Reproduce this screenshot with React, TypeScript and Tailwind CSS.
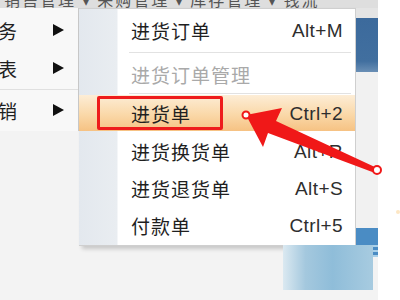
import React from "react";

const cjk = "font-['Noto_Sans_CJK_SC','Microsoft_YaHei',sans-serif]";
const latin = "font-['Liberation_Sans','Noto_Sans',sans-serif]";

interface ItemProps {
  label: string;
  shortcut?: string;
  disabled?: boolean;
  active?: boolean;
  h: string;
}

const MenuItem = ({ label, shortcut, disabled, active, h }: ItemProps) => (
  <div
    className={`${h} flex items-center justify-between pl-[52px] pr-[12px] ${
      active ? "bg-[linear-gradient(180deg,#fdedd6_0%,#fad8a8_55%,#f6c283_100%)]" : ""
    }`}
  >
    <span
      className={`${cjk} text-[19px] tracking-[1px] leading-none ${
        disabled ? "text-[#a9a9a9]" : "text-[#1f1f1f]"
      }`}
    >
      {label}
    </span>
    {shortcut && (
      <span className={`${latin} text-[19px] tracking-[0.4px] leading-none text-[#2e2e2e]`}>
        {shortcut}
      </span>
    )}
  </div>
);

const Separator = ({ h }: { h: string }) => (
  <div className={`${h} flex items-center pl-[50px] pr-[4px]`}>
    <div className="h-px w-full bg-[#e2e2e2]" />
  </div>
);

const LeftItem = ({ label, h }: { label: string; h: string }) => (
  <div className={`${h} flex items-center justify-between pr-[14px]`}>
    <span className={`${cjk} text-[19px] leading-none text-[#1f1f1f] ml-[-2px]`}>{label}</span>
    <svg width="11" height="12" viewBox="0 0 11 12">
      <polygon points="0,0 11,6 0,12" fill="#111" />
    </svg>
  </div>
);

export default function App() {
  return (
    <div className="relative w-[400px] h-[300px] overflow-hidden bg-white">
      <div className="flex h-full">
        {/* main window area */}
        <div className="w-[378px] h-full flex flex-col bg-[#f3f3f3]">
          <div className="h-[8px] overflow-hidden bg-[#dedede]">
            <div className={`${cjk} mt-[-13px] text-[16px] text-[#555] whitespace-nowrap pl-[4px] tracking-[2px]`}>
              销售管理 ▾ 采购管理 ▾ 库存管理 ▾ 钱流
            </div>
          </div>
          <div className="flex">
            {/* left menu */}
            <div className="w-[79px] h-[123px] bg-[#f8f8f8] pt-[3px] border-r border-[#c9c9c9]">
              <LeftItem label="务" h="h-[38px]" />
              <LeftItem label="表" h="h-[38px]" />
              <div className="h-[4px] flex items-center">
                <div className="h-px w-full bg-[#e0e0e0]" />
              </div>
              <LeftItem label="销" h="h-[38px]" />
            </div>
            {/* submenu */}
            <div className="w-[277px] h-[238px] pt-[3px] pb-[2px] border-t border-r border-b border-[#cfcfcf] bg-[linear-gradient(90deg,#e3e8ee_0px,#e9edf1_38px,#ffffff_39px)] shadow-[3px_3px_4px_rgba(0,0,0,0.18)]">
              <MenuItem label="进货订单" shortcut="Alt+M" h="h-[37px]" />
              <Separator h="h-[7px]" />
              <MenuItem label="进货订单管理" disabled h="h-[36px]" />
              <Separator h="h-[3px]" />
              <MenuItem label="进货单" shortcut="Ctrl+2" active h="h-[36px]" />
              <div className="h-[2px]" />
              <MenuItem label="进货换货单" shortcut="Alt+R" h="h-[37px]" />
              <MenuItem label="进货退货单" shortcut="Alt+S" h="h-[37px]" />
              <MenuItem label="付款单" shortcut="Ctrl+5" h="h-[37px]" />
            </div>
            {/* right strip */}
            <div className="flex-1 flex flex-col">
              <div className="h-[10px] bg-[#e4e4e4]" />
              <div className="h-[54px] bg-[linear-gradient(180deg,#3c6a9c_0%,#416f9f_80%,#6a8fb5_100%)]" />
              <div className="h-[156px] bg-[#f1f1f1]" />
              <div className="flex-1 bg-[#4a8cc4] flex flex-col gap-[3px] pt-[17px]">
                <div className="h-[2px] bg-[#a9cfe8]" />
                <div className="h-[2px] bg-[#a9cfe8]" />
                <div className="h-[2px] bg-[#a9cfe8]" />
              </div>
            </div>
          </div>
          <div className="flex-1" />
        </div>
        <div className="flex-1 bg-white" />
      </div>

      {/* blurred patch */}
      <div className="absolute left-[283px] top-[245px] w-[90px] h-[45px] bg-[linear-gradient(90deg,#dbe9f1_0%,#a4c8de_25%,#8fbdd9_55%,#a7cbe0_100%)]" />

      {/* red highlight box */}
      <div className="absolute left-[97px] top-[96px] w-[126px] h-[34px] border-[3px] border-[#ee1c1c] rounded-[2px]" />

      {/* arrow */}
      <svg className="absolute inset-0" width="400" height="300" viewBox="0 0 400 300">
        <polygon
          points="246,115 282,108 276,121 377,168 375,173 268,133 263,147"
          fill="#f01818"
        />
        <circle cx="246" cy="115" r="3.5" fill="#fff" stroke="#f01818" strokeWidth="2" />
        <circle cx="377" cy="170" r="4" fill="#fff" stroke="#f01818" strokeWidth="2" />
        <circle cx="398" cy="212" r="2" fill="#fde7c4" />
      </svg>
    </div>
  );
}
